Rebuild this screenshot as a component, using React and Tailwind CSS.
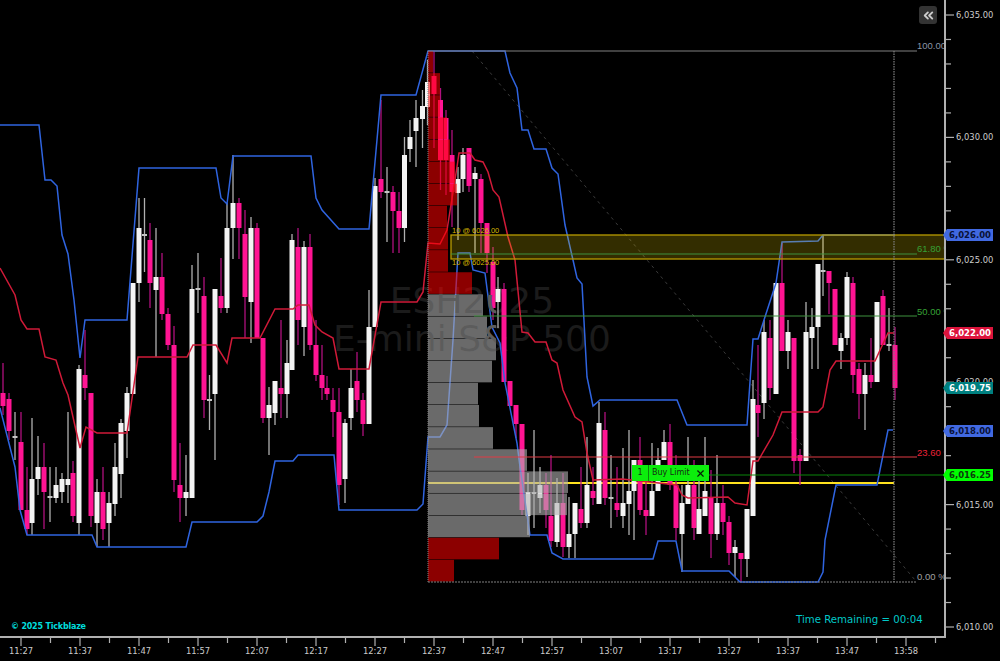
import { ChevronsLeft, X } from "lucide-react";

// [x, bodyTop, bodyBottom, wickTop, wickBottom, colour]
const CANDLES = [
  [3, 393, 406, 363, 415, "p"], [9, 399, 431, 393, 440, "p"], [15, 436, 438, 412, 460, "w"], [21, 442, 510, 412, 510, "p"],
  [27, 510, 529, 467, 535, "p"], [32, 479, 523, 418, 535, "w"], [38, 467, 479, 436, 495, "w"], [44, 467, 492, 443, 529, "p"],
  [50, 496, 498, 467, 522, "w"], [56, 485, 498, 467, 503, "w"], [62, 479, 492, 473, 503, "w"], [68, 479, 485, 412, 503, "w"],
  [73, 473, 516, 461, 522, "p"], [79, 369, 523, 365, 535, "w"], [85, 375, 388, 330, 400, "p"], [91, 393, 516, 393, 527, "p"],
  [97, 492, 523, 479, 547, "w"], [103, 492, 529, 467, 540, "p"], [109, 503, 523, 492, 547, "w"], [115, 467, 504, 443, 516, "w"],
  [121, 423, 474, 419, 498, "w"], [127, 393, 431, 387, 458, "w"], [133, 283, 394, 283, 394, "w"], [139, 228, 283, 198, 302, "w"],
  [144.5, 234, 236, 198, 272, "w"], [150, 240, 283, 223, 308, "p"], [156, 277, 290, 228, 357, "w"], [162, 277, 314, 253, 320, "p"],
  [168, 314, 345, 308, 350, "p"], [174, 345, 480, 326, 492, "p"], [180, 485, 498, 443, 522, "p"], [186, 492, 498, 455, 516, "w"],
  [192, 289, 498, 265, 498, "w"], [198, 288, 290, 253, 313, "w"], [204, 296, 400, 277, 418, "p"], [209.5, 399, 401, 375, 430, "w"],
  [215, 289, 394, 289, 460, "w"], [221, 296, 308, 258, 313, "p"], [227, 228, 308, 203, 313, "w"], [233, 203, 228, 155, 259, "w"],
  [239, 203, 228, 198, 259, "p"], [245, 234, 297, 210, 338, "p"], [251, 228, 302, 217, 343, "w"], [257, 228, 338, 223, 338, "p"],
  [263, 338, 418, 338, 423, "p"], [269, 405, 418, 387, 455, "w"], [275, 381, 413, 381, 425, "w"], [281, 388, 394, 320, 418, "p"],
  [287, 363, 394, 340, 418, "w"], [292, 240, 370, 234, 370, "w"], [298, 247, 320, 228, 345, "p"], [304, 247, 327, 241, 356, "w"],
  [310, 247, 345, 234, 350, "p"], [316, 345, 375, 320, 381, "p"], [322, 375, 388, 345, 400, "p"], [327, 388, 394, 376, 400, "p"],
  [333, 400, 412, 388, 437, "p"], [339, 412, 485, 388, 505, "p"], [345, 423, 479, 419, 503, "w"], [351, 388, 418, 369, 430, "w"],
  [357, 381, 400, 352, 412, "p"], [363, 400, 424, 393, 436, "p"], [369, 327, 424, 290, 424, "w"], [375, 186, 327, 178, 327, "w"],
  [381, 179, 192, 100, 198, "p"], [387, 191, 193, 167, 242, "w"], [393, 192, 211, 186, 253, "p"], [399, 211, 228, 192, 253, "p"],
  [404.5, 155, 228, 137, 242, "w"], [410, 137, 149, 120, 162, "w"], [416, 118, 131, 100, 167, "w"], [422.5, 106, 119, 90, 148, "w"],
  [427.5, 82, 107, 60, 125, "w"], [434, 76, 94, 51, 148, "p"], [440.5, 100, 160, 88, 190, "p"], [446, 118, 160, 110, 195, "p"],
  [452, 155, 192, 130, 227, "p"], [458, 179, 193, 167, 240, "w"], [463, 155, 179, 148, 192, "w"], [469, 148, 186, 148, 192, "p"],
  [475, 173, 179, 167, 253, "w"], [481, 179, 223, 174, 253, "p"], [487, 223, 253, 223, 273, "p"], [493, 262, 308, 247, 320, "p"],
  [498, 289, 302, 277, 328, "w"], [504, 289, 382, 283, 382, "p"], [510, 381, 406, 381, 406, "p"], [516, 405, 424, 405, 438, "p"],
  [522, 424, 510, 424, 515, "p"], [528, 492, 516, 473, 535, "w"], [534, 492, 494, 430, 528, "w"], [540, 485, 498, 467, 513, "w"],
  [546, 485, 510, 473, 528, "p"], [551, 516, 541, 455, 547, "p"], [557, 503, 542, 478, 547, "w"], [563, 503, 547, 473, 557, "p"],
  [569, 534, 547, 497, 558, "w"], [575, 503, 534, 503, 558, "w"], [581, 509, 523, 467, 528, "p"], [587, 485, 523, 437, 528, "w"],
  [593, 491, 498, 467, 505, "p"], [599, 423, 504, 402, 504, "w"], [605, 430, 498, 412, 505, "p"], [611, 497, 499, 455, 528, "w"],
  [617, 503, 510, 467, 517, "p"], [623, 503, 516, 448, 528, "w"], [629, 491, 504, 430, 535, "w"], [634, 460, 491, 460, 540, "w"],
  [640, 460, 510, 437, 515, "p"], [646, 510, 516, 473, 535, "p"], [652, 491, 516, 443, 516, "w"], [658, 460, 491, 448, 491, "w"],
  [664, 442, 460, 430, 460, "w"], [670, 442, 485, 424, 490, "p"], [676, 485, 528, 455, 540, "p"], [682, 503, 534, 485, 572, "w"],
  [688, 485, 504, 437, 504, "w"], [694, 485, 528, 460, 540, "p"], [699, 509, 534, 465, 534, "w"], [705, 491, 516, 437, 516, "w"],
  [711, 497, 534, 470, 558, "p"], [717, 503, 534, 455, 540, "w"], [723, 503, 522, 485, 535, "p"], [729, 522, 553, 516, 565, "p"],
  [735, 547, 553, 540, 577, "w"], [741, 553, 559, 553, 582, "p"], [747, 509, 559, 509, 577, "w"], [753, 399, 516, 380, 516, "w"],
  [758, 405, 413, 345, 437, "p"], [764, 332, 403, 320, 419, "w"], [770, 338, 388, 320, 400, "p"], [776, 283, 394, 283, 394, "w"],
  [782, 283, 351, 243, 351, "p"], [788, 332, 351, 320, 369, "w"], [794, 338, 461, 338, 473, "p"], [800, 455, 461, 449, 485, "p"],
  [806, 332, 461, 302, 461, "w"], [812, 327, 338, 308, 369, "w"], [818, 264, 327, 264, 369, "w"], [823, 270, 272, 235, 296, "w"],
  [829, 271, 283, 271, 314, "p"], [835, 289, 345, 289, 345, "p"], [841, 338, 351, 333, 369, "w"], [847, 277, 338, 272, 345, "w"],
  [853, 283, 375, 277, 393, "p"], [859, 369, 394, 363, 419, "p"], [865, 375, 394, 363, 430, "w"], [871, 375, 382, 338, 388, "p"],
  [877, 302, 382, 302, 382, "w"], [883, 296, 345, 290, 345, "p"], [889, 344, 346, 308, 351, "w"], [895, 345, 388, 327, 400, "p"],
];

const BLUE_UPPER = "0,125 39,125 45,180 51,180 57,186 62,235 68,254 74,300 80,358 85,320 127,320 139,168 216,168 221,198 227,204 233,156 311,156 316,198 322,210 339,229 369,229 381,95 416,95 428,51 505,51 510,73 517,88 522,130 528,130 534,149 546,149 552,168 558,174 565,225 573,260 577,278 582,284 587,377 593,406 600,400 677,400 687,425 747,425 753,339 758,339 764,320 776,283 782,242 818,241 823,235 895,235";
const BLUE_LOWER = "0,408 15,467 20,510 27,535 92,535 97,547 186,547 192,522 257,522 263,516 269,492 275,461 293,461 298,455 334,455 339,510 417,510 423,504 428,437 440,437 447,425 453,340 458,253 470,253 473,270 485,273 492,327 500,343 505,383 517,443 520,467 530,535 547,535 552,553 563,559 653,559 658,541 676,541 682,571 729,571 740,582 818,582 823,572 825,540 833,500 836,485 877,485 888,430 893,430";
const RED_LINE = "0,268 15,295 21,320 27,329 39,329 45,357 56,360 63,383 68,395 80,448 86,427 97,433 127,433 138,357 187,357 193,345 216,345 227,363 232,338 260,338 275,309 293,309 298,305 309,305 315,325 322,332 333,338 339,369 369,369 381,302 417,302 423,292 428,243 440,244 447,230 457,167 459,153 470,153 475,160 483,162 488,172 493,190 499,197 508,237 515,260 522,332 528,333 535,342 546,342 552,360 557,363 563,390 575,417 582,422 587,453 593,480 622,479 677,485 682,495 688,498 728,497 735,503 747,505 753,461 758,461 773,435 782,412 818,412 823,407 830,370 836,361 875,361 888,333 894,333";

// volume profile rows, top to bottom: right edge of each row and its tint
const PROFILE = [
  [433, "r"], [440, "r"], [440, "r"], [447, "r"], [450, "r"], [455, "r"], [457, "r"], [447, "r"], [448, "r"], [448, "r"], [472, "r"],
  [483, "g"], [487, "g"], [496, "g"], [492, "g"], [478, "g"], [479, "g"], [493, "g"], [527, "g"], [568, "g"], [567, "g"], [530, "g"],
  [499, "r"], [454, "r"],
];

const PRICE_LABELS = ["6,035.00", "6,030.00", "6,025.00", "6,020.00", "6,015.00", "6,010.00"];
const TIMES = ["11:27", "11:37", "11:47", "11:57", "12:07", "12:17", "12:27", "12:37", "12:47", "12:57", "13:07", "13:17", "13:27", "13:37", "13:47", "13:58"];

const PriceTag = ({ y, label, className }) => (
  <div
    style={{ top: y - 6 }}
    className={`absolute -left-[3px] w-[50px] h-[12px] flex items-center justify-end pr-[2px] text-[8.5px] font-bold leading-none [clip-path:polygon(0_50%,4px_0,100%_0,100%_100%,4px_100%)] ${className}`}
  >
    {label}
  </div>
);

const Candle = ({ c }) => {
  const [x, top, bottom, wickTop, wickBottom, kind] = c;
  const white = kind === "w";
  const doji = bottom - top <= 2;
  return (
    <g>
      <line x1={x} x2={x} y1={wickTop} y2={wickBottom} stroke={white ? "#b0b0b0" : "#b0107e"} strokeWidth="1.3" />
      <rect
        x={x - 2.5}
        y={top}
        width="5"
        height={bottom - top}
        fill={doji ? "#c4c4c4" : white ? "#f4f4f4" : "#ff1493"}
      />
    </g>
  );
};

const Watermark = ({ fill }) => (
  <g fontSize="36" textAnchor="middle" fill={fill}>
    <text x="472" y="313">ESH2025</text>
    <text x="472" y="351">E-mini S&amp;P 500</text>
  </g>
);

const Plot = () => (
  <svg width="944" height="636" viewBox="0 0 944 636" className="block">
    <defs>
      <clipPath id="grayRows">
        <rect x="428" y="295" width="68" height="67" />
      </clipPath>
    </defs>

    <Watermark fill="#1b1b1b" />

    {/* fib trend line */}
    <line x1="472" y1="51" x2="915" y2="580" stroke="#3a3a3a" strokeDasharray="3 4" />

    <line x1="428" x2="894" y1="483" y2="483" stroke="#ffe21f" strokeWidth="2" />

    {CANDLES.map((c) => (
      <Candle key={c[0]} c={c} />
    ))}

    <polyline points={RED_LINE} fill="none" stroke="#d01a38" strokeWidth="1.5" />
    <polyline points={BLUE_UPPER} fill="none" stroke="#2f64e0" strokeWidth="1.5" />
    <polyline points={BLUE_LOWER} fill="none" stroke="#2f64e0" strokeWidth="1.5" />

    {/* volume profile sits over the candles, they show through it */}
    {PROFILE.map(([right, tint], i) => (
      <rect
        key={i}
        x="428"
        y={51 + i * 22.125}
        width={right - 428}
        height="21.6"
        fill={tint === "r" ? "#ff0000" : "#b0b0b0"}
        fillOpacity={tint === "r" ? 0.55 : 0.6}
      />
    ))}
    <g clipPath="url(#grayRows)">
      <Watermark fill="#5c5c5c" />
    </g>

    {/* orders */}
    <rect x="451" y="235" width="494" height="24" fill="#ffe000" fillOpacity="0.2" stroke="#b89c00" strokeWidth="1.3" />
    <text x="452" y="233" fontSize="7.5" fill="#d8b800" fontFamily="Liberation Sans">10 @ 6026.00</text>
    <text x="452" y="265" fontSize="7.5" fill="#d8b800" fontFamily="Liberation Sans">10 @ 6025.00</text>
    <line x1="708" x2="944" y1="475" y2="475" stroke="#0b860b" strokeWidth="1.2" />

    {/* fib levels */}
    <line x1="428" x2="917" y1="51" y2="51" stroke="#808080" strokeWidth="1.2" />
    <line x1="428" x2="917" y1="582" y2="582" stroke="#808080" strokeDasharray="2 1" strokeWidth="1.2" />
    <line x1="428" x2="428" y1="51" y2="582" stroke="#808080" strokeDasharray="1 1" />
    <line x1="894" x2="894" y1="51" y2="582" stroke="#808080" strokeDasharray="1.5 1" strokeWidth="1.2" />
    <line x1="451" x2="917" y1="254" y2="254" stroke="#3f913f" strokeWidth="1.2" />
    <line x1="474" x2="917" y1="316" y2="316" stroke="#3f913f" strokeWidth="1.2" />
    <line x1="474" x2="917" y1="457" y2="457" stroke="#e03a44" strokeWidth="1.2" />
    <g fontSize="9.5" fontFamily="Liberation Sans">
      <text x="917" y="49" fill="#8a95a6">100.00 %</text>
      <text x="917" y="252" fill="#36a036">61.80 %</text>
      <text x="917" y="315" fill="#36a036">50.00 %</text>
      <text x="917" y="456" fill="#ee2238">23.60 %</text>
      <text x="917" y="580" fill="#a0a0a0">0.00 %</text>
    </g>

    <text x="796" y="623" fontSize="10.2" fill="#00c8c8">Time Remaining = 00:04</text>
    <text x="11" y="629" fontSize="8" fontWeight="bold" fill="#00dcdc" letterSpacing="-0.2">© 2025 Tickblaze</text>
  </svg>
);

const PriceAxis = () => (
  <svg width="54" height="636" viewBox="0 0 54 636" className="block">
    {Array.from({ length: 26 }, (_, k) => {
      const y = 15 + k * 24.48;
      return <line key={k} x1="0" x2={k % 5 === 0 ? 8 : 5} y1={y} y2={y} stroke="#b0b0b0" strokeWidth="1.2" />;
    })}
    {PRICE_LABELS.map((label, i) => (
      <text key={label} x="10" y={15 + i * 122.4 + 3} fontSize="8.4" fill="#cccccc">
        {label}
      </text>
    ))}
  </svg>
);

const TimeAxis = () => (
  <svg width="944" height="22" viewBox="0 0 944 22" className="block">
    {Array.from({ length: 32 }, (_, k) => {
      const x = 21 + k * 29.5;
      return <line key={k} x1={x} x2={x} y1="0" y2={k % 2 === 0 ? 8 : 5} stroke="#b0b0b0" strokeWidth="1.2" />;
    })}
    {TIMES.map((t, i) => (
      <text key={t} x={21 + i * 59} y="16" textAnchor="middle" fontSize="8.4" fill="#cccccc">
        {t}
      </text>
    ))}
  </svg>
);

export default function App() {
  return (
    <div className="w-[1000px] h-[661px] overflow-hidden bg-black flex flex-col font-['DejaVu_Sans',sans-serif]">
      <div className="flex h-[636px]">
        <div className="relative w-[944px]">
          <Plot />
          <button className="absolute left-[919px] top-[6px] w-[18px] h-[18px] rounded-[3px] bg-[#333333] flex items-center justify-center text-[#cccccc]">
            <ChevronsLeft size={15} strokeWidth={3} />
          </button>
          <div className="absolute left-[632px] top-[465px] w-[77px] h-[16px] bg-[#0cee0c] flex items-center text-[8px] text-[#143014]">
            <span className="w-[17px] text-center border-r border-[#0a8a0a] leading-[16px]">1</span>
            <span className="flex-1 pl-[3px]">Buy Limit</span>
            <X size={11} strokeWidth={2.5} className="mr-[3px] text-[#082008]" />
          </div>
        </div>
        <div className="relative w-[56px] border-l-2 border-[#b0b0b0]">
          <PriceAxis />
          <PriceTag y={235} label="6,026.00" className="bg-[#4169e1] text-[#0a1238]" />
          <PriceTag y={333} label="6,022.00" className="bg-[#dc143c] text-white" />
          <PriceTag y={388} label="6,019.75" className="bg-[#008080] text-white" />
          <PriceTag y={431} label="6,018.00" className="bg-[#4169e1] text-[#0a1238]" />
          <PriceTag y={475} label="6,016.25" className="bg-[#00ff00] text-[#0c3a0c]" />
        </div>
      </div>
      <div className="h-[25px] w-[946px] border-t-2 border-[#b0b0b0]">
        <TimeAxis />
      </div>
    </div>
  );
}
